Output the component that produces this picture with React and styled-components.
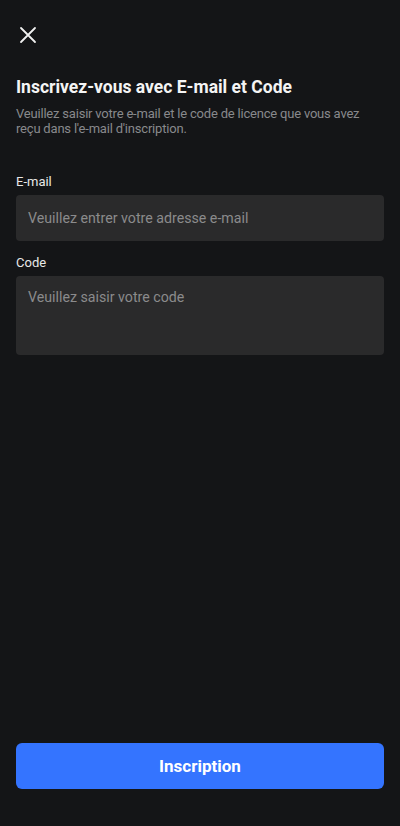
import React from "react";
import styled, { createGlobalStyle } from "styled-components";

const Global = createGlobalStyle`
  html, body {
    margin: 0;
    padding: 0;
    background: #141517;
  }
  * { box-sizing: border-box; }
`;

const Screen = styled.div`
  width: 400px;
  height: 826px;
  background: #141517;
  display: flex;
  flex-direction: column;
  padding: 0 16px;
  font-family: Roboto, "Noto Sans", sans-serif;
  color: #f2f2f2;
`;

const CloseButton = styled.button`
  width: 24px;
  height: 24px;
  margin: 23px 0 0 0;
  padding: 0;
  border: none;
  background: none;
  color: #f0f0f0;
  display: flex;
  align-items: center;
  justify-content: center;
  cursor: pointer;
`;

const Title = styled.h1`
  margin: 28px 0 0;
  font-size: 17.5px;
  line-height: 24px;
  font-weight: 700;
  color: #f4f4f4;
`;

const Subtitle = styled.p`
  margin: 7px 0 0;
  font-size: 13px;
  line-height: 15px;
  letter-spacing: -0.2px;
  color: #88898c;
`;

const Form = styled.div`
  margin-top: 38px;
  display: flex;
  flex-direction: column;
`;

const Label = styled.label`
  display: block;
  font-size: 13px;
  line-height: 16px;
  color: #e8e8e8;
  margin-bottom: 5px;
  margin-top: ${(p) => (p.$first ? "0" : "14px")};
`;

const fieldBase = `
  width: 100%;
  border: none;
  outline: none;
  border-radius: 4px;
  background: #2a2a2b;
  color: #eee;
  font-family: Roboto, "Noto Sans", sans-serif;
  font-size: 14.2px;
  padding: 0 12px;
  &::placeholder { color: #8b8b8c; }
`;

const Input = styled.input`
  ${fieldBase}
  height: 46px;
`;

const TextArea = styled.textarea`
  ${fieldBase}
  height: 79px;
  padding-top: 12px;
  line-height: 18px;
  resize: none;
`;

const Spacer = styled.div`
  flex: 1;
`;

const SubmitButton = styled.button`
  width: 100%;
  height: 46px;
  margin-bottom: 37px;
  border: none;
  border-radius: 6px;
  background: #3474ff;
  color: #fff;
  font-family: Roboto, "Noto Sans", sans-serif;
  font-size: 17px;
  font-weight: 700;
  cursor: pointer;
`;

const CloseIcon = () => (
  <svg width="18" height="18" viewBox="0 0 18 18" fill="none">
    <path d="M2 2L16 16M16 2L2 16" stroke="currentColor" strokeWidth="1.8" strokeLinecap="round" />
  </svg>
);

export default function App() {
  return (
    <>
      <Global />
      <Screen>
        <CloseButton aria-label="Fermer">
          <CloseIcon />
        </CloseButton>
        <Title>Inscrivez-vous avec E-mail et Code</Title>
        <Subtitle>
          Veuillez saisir votre e-mail et le code de licence que vous avez reçu dans l'e-mail
          d'inscription.
        </Subtitle>
        <Form>
          <Label $first>E-mail</Label>
          <Input placeholder="Veuillez entrer votre adresse e-mail" />
          <Label>Code</Label>
          <TextArea placeholder="Veuillez saisir votre code" />
        </Form>
        <Spacer />
        <SubmitButton>Inscription</SubmitButton>
      </Screen>
    </>
  );
}
